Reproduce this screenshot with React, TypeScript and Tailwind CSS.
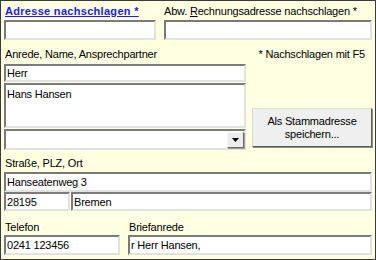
const sunken =
  'border-2 border-t-[#7a7a7a] border-l-[#7a7a7a] border-r-[#e2e2e2] border-b-[#e2e2e2] bg-white'

function Field({ value, className = '' }: { value?: string; className?: string }) {
  return (
    <div className={`${sunken} flex items-center pl-[1px] leading-[14px] whitespace-nowrap overflow-hidden ${className}`}>
      {value}
    </div>
  )
}

function Label({ children, className = '' }: { children: React.ReactNode; className?: string }) {
  return <div className={`leading-[14px] whitespace-nowrap ${className}`}>{children}</div>
}

export default function App() {
  return (
    <div className="w-[376px] h-[260px] border border-[#3a3a3a] bg-[#ffffe1] px-[3px] pt-[3px] font-['Liberation_Sans',Arial,sans-serif] text-[11px] tracking-[-0.2px] text-black">
      {/* lookup row */}
      <div className="flex gap-[8px]">
        <div className="w-[152px]">
          <Label className="mb-[2px] pl-[1px] font-bold text-[#1a1aff] underline underline-offset-[1px] tracking-[0.3px]">
            Adresse nachschlagen *
          </Label>
          <Field className="h-[20px]" />
        </div>
        <div className="w-[208px]">
          <Label className="mb-[2px]">
            Abw. <span className="underline underline-offset-[1px]">R</span>echnungsadresse nachschlagen *
          </Label>
          <Field className="h-[20px]" />
        </div>
      </div>

      {/* name block */}
      <div className="flex gap-[6px]">
        <div className="w-[242px]">
          <Label className="mt-[7px] mb-[3px] pl-[1px]">Anrede, Name, Ansprechpartner</Label>
          <Field className="h-[18px]" value="Herr" />
          <div className={`${sunken} mt-[1px] h-[45px] pl-[1px] pt-[2px] leading-[14px]`}>Hans Hansen</div>
          <div className={`${sunken} mt-[1px] h-[21px] flex items-center justify-end`}>
            <div className="w-[17px] h-[16px] flex items-center justify-center bg-[#ececec] border border-t-[#f8f8f8] border-l-[#f8f8f8] border-r-[#6a6a6a] border-b-[#6a6a6a] shadow-[1px_1px_0_#a0a0a0]">
              <svg width="7" height="4" viewBox="0 0 7 4">
                <path d="M0 0h7L3.5 4z" fill="#000" />
              </svg>
            </div>
          </div>
        </div>
        <div className="w-[120px] flex flex-col">
          <Label className="mt-[7px] text-right pr-[7px]">* Nachschlagen mit F5</Label>
          <button className="mt-[47px] h-[39px] w-[120px] bg-[#efefef] border border-t-[#dcdcdc] border-l-[#dcdcdc] border-r-[#5e5e5e] border-b-[#5e5e5e] shadow-[1px_1px_0_#8a8a8a] leading-[13px] text-center">
            Als Stammadresse
            <br />
            speichern...
          </button>
        </div>
      </div>

      {/* street block */}
      <Label className="mt-[6px] mb-[2px] pl-[1px]">Straße, PLZ, Ort</Label>
      <Field className="h-[20px] w-[368px]" value="Hanseatenweg 3" />
      <div className="flex gap-[1px] w-[368px]">
        <Field className="h-[19px] w-[66px]" value="28195" />
        <Field className="h-[19px] flex-1" value="Bremen" />
      </div>

      {/* phone + salutation */}
      <div className="flex gap-[8px]">
        <div className="w-[116px]">
          <Label className="mt-[9px] mb-[1px] pl-[1px]">Telefon</Label>
          <Field className="h-[20px]" value="0241 123456" />
        </div>
        <div className="w-[244px]">
          <Label className="mt-[9px] mb-[1px] pl-[1px]">Briefanrede</Label>
          <Field className="h-[20px]" value="r Herr Hansen," />
        </div>
      </div>
    </div>
  )
}
